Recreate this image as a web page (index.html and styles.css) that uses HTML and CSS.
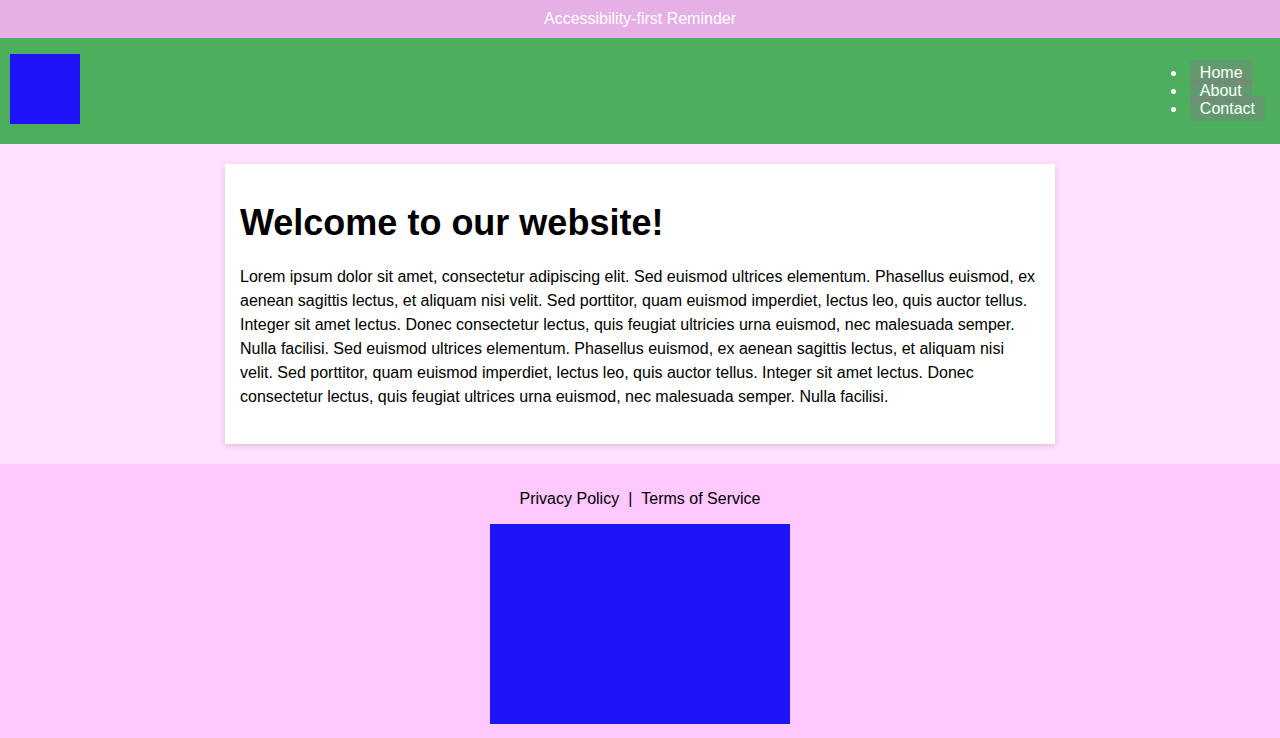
FILE: index.html
```html
<!DOCTYPE html>
<html lang="en">
<head>
<meta charset="utf-8">
<title>Accessibility-first</title>
<link rel="stylesheet" href="styles.css">
</head>
<body>
<div class="reminder">Accessibility-first Reminder</div>
<header class="site-header">
  <div class="logo" aria-label="Logo"></div>
  <nav class="nav">
    <ul class="nav-list">
      <li class="nav-item"><a class="nav-link" href="#">Home</a></li>
      <li class="nav-item"><a class="nav-link" href="#">About</a></li>
      <li class="nav-item"><a class="nav-link" href="#">Contact</a></li>
    </ul>
  </nav>
</header>
<main class="main">
  <article class="card">
    <h1 class="title">Welcome to our website!</h1>
    <p class="text">Lorem ipsum dolor sit amet, consectetur adipiscing elit. Sed euismod ultrices elementum. Phasellus euismod, ex aenean sagittis lectus, et aliquam nisi velit. Sed porttitor, quam euismod imperdiet, lectus leo, quis auctor tellus. Integer sit amet lectus. Donec consectetur lectus, quis feugiat ultricies urna euismod, nec malesuada semper. Nulla facilisi. Sed euismod ultrices elementum. Phasellus euismod, ex aenean sagittis lectus, et aliquam nisi velit. Sed porttitor, quam euismod imperdiet, lectus leo, quis auctor tellus. Integer sit amet lectus. Donec consectetur lectus, quis feugiat ultrices urna euismod, nec malesuada semper. Nulla facilisi.</p>
  </article>
</main>
<footer class="site-footer">
  <p class="footer-links"><a class="footer-link" href="#">Privacy Policy</a><span class="sep">|</span><a class="footer-link" href="#">Terms of Service</a></p>
  <div class="map"></div>
</footer>
</body>
</html>
```
FILE: styles.css
```css
html, body {
  margin: 0;
  padding: 0;
}
body {
  font-family: "Liberation Sans", Arial, sans-serif;
  font-size: 16px;
  color: #000;
  background: #ffe1ff;
}
.reminder {
  background: #e6afe6;
  color: #fff;
  text-align: center;
  padding: 10px;
  line-height: 18px;
}
.site-header {
  background: #4caf5e;
  display: flex;
  justify-content: space-between;
  align-items: center;
  padding: 10px 15px 10px 10px;
}
.logo {
  width: 70px;
  height: 70px;
  background: #2013fa;
  margin-bottom: 4px;
}
.nav-list {
  margin: 16px 0;
  padding-left: 40px;
  color: #fff;
  line-height: 18px;
}
.nav-item {
  padding-left: 3px;
}
.nav-link {
  color: #fff;
  text-decoration: none;
  background: rgba(128, 128, 128, 0.45);
  padding: 4px 10px;
  border-radius: 4px;
}
.main {
  padding: 20px;
  display: flex;
  justify-content: center;
}
.card {
  width: 800px;
  background: #fff;
  padding: 15px;
  box-shadow: 0 2px 6px rgba(0, 0, 0, 0.15);
}
.title {
  font-size: 36px;
  font-weight: bold;
  margin: 23px 0 22px;
  line-height: 41px;
}
.text {
  margin: 0 0 20px;
  line-height: 24px;
}
.site-footer {
  background: #ffc8ff;
  padding: 10px 10px 14px;
  display: flex;
  flex-direction: column;
  align-items: center;
}
.footer-links {
  margin: 16px 0;
  line-height: 18px;
}
.footer-link {
  color: #000;
  text-decoration: none;
}
.sep {
  margin: 0 9px;
}
.map {
  width: 300px;
  height: 200px;
  background: #2013fa;
}
```
